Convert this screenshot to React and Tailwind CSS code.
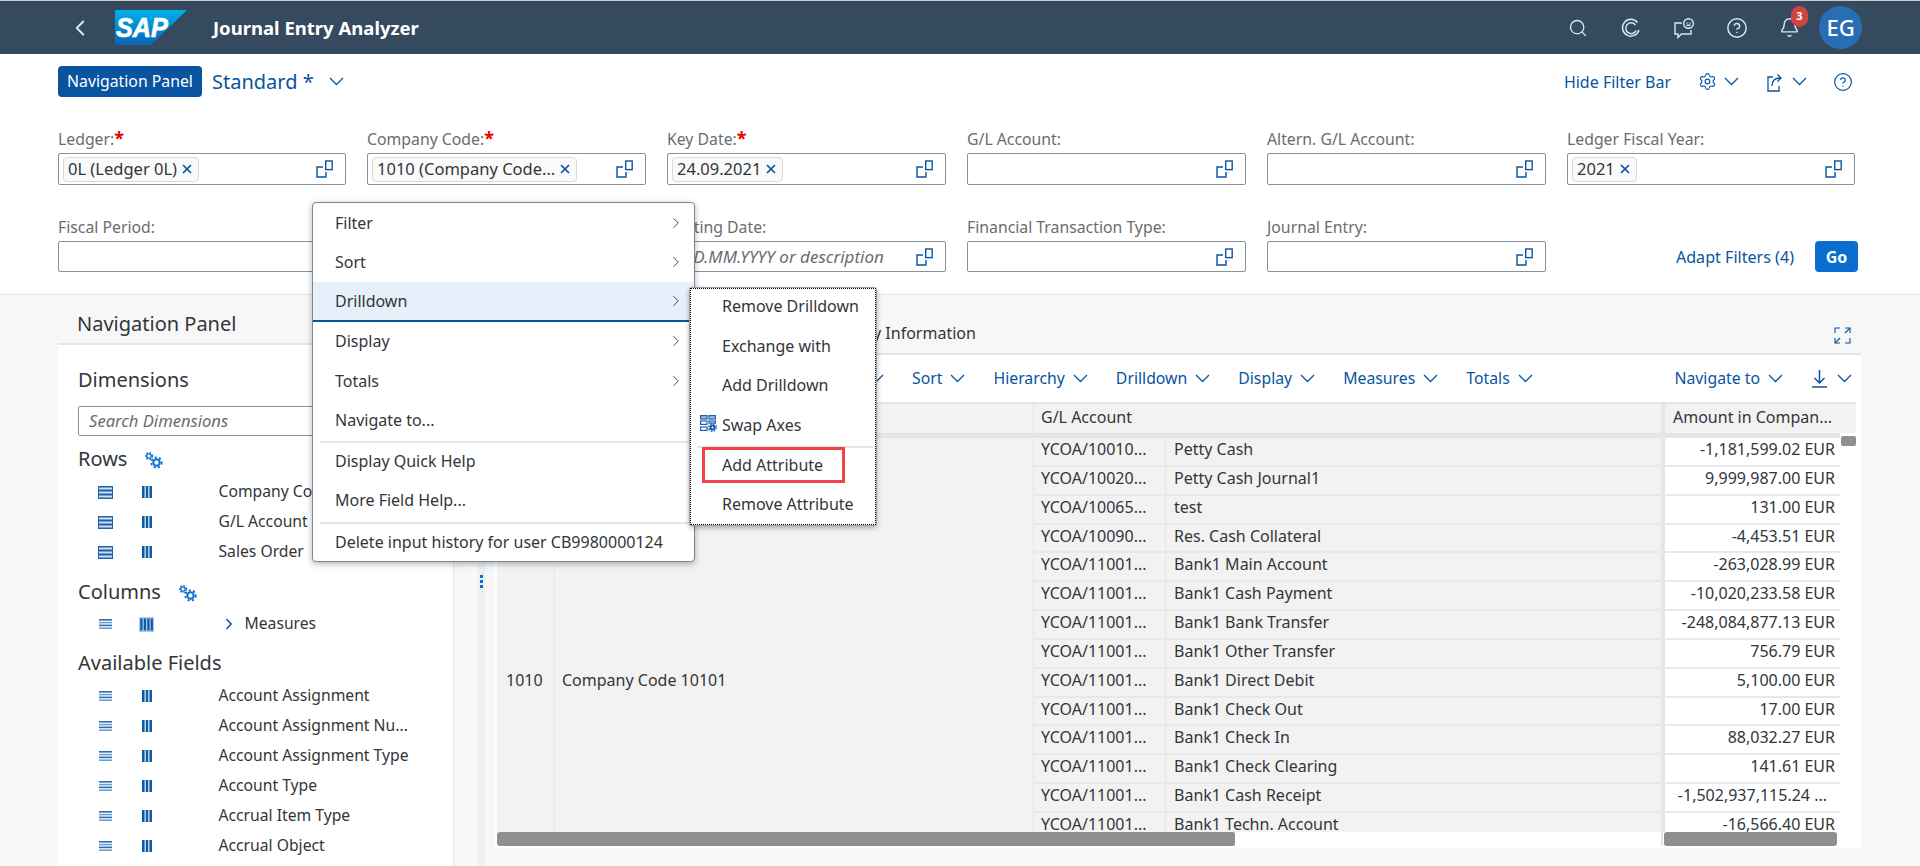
import React from "react";
import { Search, CircleHelp, Bell, Settings, ChevronRight, ChevronLeft, X } from "lucide-react";

const font = "font-['Noto_Sans','Open_Sans',sans-serif]";

function Chev({ className = "" }) {
  return (
    <svg width="15" height="9" viewBox="0 0 15 9" fill="none" stroke="currentColor" strokeWidth="1.3" className={`shrink-0 ${className}`}>
      <path d="M1 1l6.5 6.5L14 1" />
    </svg>
  );
}

function ValueHelp() {
  return (
    <svg width="17" height="18" viewBox="0 0 17 18" fill="none" stroke="#0854a0" strokeWidth="1.4">
      <rect x="9.7" y="1" width="6.5" height="8.6" />
      <path d="M7 7H1v10h9v-5" />
    </svg>
  );
}

function Chip({ children }) {
  return (
    <span className="flex items-center h-[25px] px-[4px] gap-[3px] rounded-[4px] border border-[#d9d9d9] bg-[#fafafa] text-[16.5px] text-[#32363a] whitespace-nowrap">
      {children}
      <X size={14} strokeWidth={3} className="text-[#0854a0]" />
    </span>
  );
}

function Field({ label, required, chip, placeholder, tall }) {
  return (
    <div>
      <div className="h-[24px] leading-[26px] text-[15.8px] text-[#6a6d70] whitespace-nowrap">
        {label}
        {required && <span className="text-[#e00] font-bold text-[18px] leading-[0]">*</span>}
      </div>
      <div className={`mt-[3px] ${tall ? "h-[32px]" : "h-[31px]"} flex items-center justify-between pl-[4px] pr-[12px] bg-white border border-[#89919a] rounded-[2px]`}>
        {chip ? <Chip>{chip}</Chip> : <span className="pl-[10px] italic text-[17px] text-[#6a6d70] whitespace-nowrap">{placeholder}</span>}
        <ValueHelp />
      </div>
    </div>
  );
}

function RowIcon({ active }) {
  if (active) {
    return (
      <svg width="15" height="13" viewBox="0 0 15 13">
        <rect width="15" height="13" fill="#1f62a8" />
        <rect x="1" y="1.5" width="13" height="2" fill="#cfe2f5" />
        <rect x="1" y="5.5" width="13" height="2" fill="#cfe2f5" />
        <rect x="1" y="9.5" width="13" height="2" fill="#cfe2f5" />
      </svg>
    );
  }
  return (
    <svg width="13" height="10" viewBox="0 0 13 10">
      <rect y="0" width="13" height="1.6" fill="#2a6cb0" />
      <rect y="2.8" width="13" height="1.6" fill="#6b9fd1" />
      <rect y="5.6" width="13" height="1.6" fill="#2a6cb0" />
      <rect y="8.4" width="13" height="1.6" fill="#6b9fd1" />
    </svg>
  );
}

function ColIcon({ active }) {
  if (active) {
    return (
      <svg width="15" height="15" viewBox="-2.5 -1.5 15 15">
        <rect x="-2.5" y="-1.5" width="15" height="15" fill="#a9c8e6" />
        <rect x="-1.2" y="0" width="2.2" height="12" fill="#0d5aa7" />
        <rect x="2.3" y="0" width="2.2" height="12" fill="#0d5aa7" />
        <rect x="5.8" y="0" width="2.2" height="12" fill="#0d5aa7" />
        <rect x="9.2" y="0" width="2.2" height="12" fill="#0d5aa7" />
      </svg>
    );
  }
  return (
    <svg width="10" height="12" viewBox="0 0 10 12">
      <rect x="0" width="2.6" height="12" fill="#0d5aa7" />
      <rect x="3.7" width="2.6" height="12" fill="#0d5aa7" />
      <rect x="7.4" width="2.6" height="12" fill="#0d5aa7" />
    </svg>
  );
}

function Cogs() {
  return (
    <svg width="18" height="17" viewBox="0 0 18 17" fill="none" stroke="#0a6ed1">
      <circle cx="4" cy="4" r="2.2" strokeWidth="1.3" />
      <circle cx="4" cy="4" r="3.4" strokeWidth="1.4" strokeDasharray="1.6 1.6" />
      <circle cx="11.5" cy="10.5" r="3.2" strokeWidth="2" />
      <circle cx="11.5" cy="10.5" r="5.2" strokeWidth="1.8" strokeDasharray="2.2 2.2" />
    </svg>
  );
}

function FieldRow({ name, active, measure }) {
  return (
    <div className="h-[30px] flex items-center ml-[12px] text-[15.7px]">
      <div className="w-[30px] flex justify-center"><RowIcon active={active} /></div>
      <div className="w-[30px] ml-[11.5px] flex justify-center"><ColIcon active={measure} /></div>
      {measure ? (
        <div className="ml-[57px] flex items-center">
          <ChevronRight size={18} strokeWidth={2} className="text-[#0854a0] ml-[1px] mr-[7px]" />
          <span className="whitespace-nowrap">{name}</span>
        </div>
      ) : (
        <span className="ml-[57px] whitespace-nowrap">{name}</span>
      )}
    </div>
  );
}

function ToolBtn({ label, ml = "" }) {
  return (
    <span className={`flex items-center gap-[8px] whitespace-nowrap ${ml}`}>
      {label}
      <Chev />
    </span>
  );
}

const rows = [
  ["YCOA/10010...", "Petty Cash", "-1,181,599.02 EUR"],
  ["YCOA/10020...", "Petty Cash Journal1", "9,999,987.00 EUR"],
  ["YCOA/10065...", "test", "131.00 EUR"],
  ["YCOA/10090...", "Res. Cash Collateral", "-4,453.51 EUR"],
  ["YCOA/11001...", "Bank1 Main Account", "-263,028.99 EUR"],
  ["YCOA/11001...", "Bank1 Cash Payment", "-10,020,233.58 EUR"],
  ["YCOA/11001...", "Bank1 Bank Transfer", "-248,084,877.13 EUR"],
  ["YCOA/11001...", "Bank1 Other Transfer", "756.79 EUR"],
  ["YCOA/11001...", "Bank1 Direct Debit", "5,100.00 EUR"],
  ["YCOA/11001...", "Bank1 Check Out", "17.00 EUR"],
  ["YCOA/11001...", "Bank1 Check In", "88,032.27 EUR"],
  ["YCOA/11001...", "Bank1 Check Clearing", "141.61 EUR"],
  ["YCOA/11001...", "Bank1 Cash Receipt", "-1,502,937,115.24 ..."],
  ["YCOA/11001...", "Bank1 Techn. Account", "-16,566.40 EUR"],
];

function MenuItem({ label, arrow, active, sep, mt = "" }) {
  return (
    <div className={`relative h-[39.5px] flex items-center pl-[22px] pr-[9px] justify-between whitespace-nowrap ${mt} ${active ? "bg-[#e5f0fa] border-b-2 border-[#0854a0]" : ""}`}>
      {sep && <div className="absolute left-[7px] right-0 top-0 h-[2px] bg-[#e5e5e5]" />}
      <span>{label}</span>
      {arrow && <ChevronRight size={18} strokeWidth={1.2} className="text-[#32363a]" />}
    </div>
  );
}

function SubItem({ label, sep, icon }) {
  return (
    <div className="relative h-[39.7px] flex items-center pl-[31px] whitespace-nowrap">
      {sep && <div className="absolute left-[6px] right-0 top-[1px] h-[2px] bg-[#e5e5e5]" />}
      {icon && <span className="absolute left-[9px] top-[10px]">{icon}</span>}
      <span>{label}</span>
    </div>
  );
}

function SwapIcon() {
  return (
    <svg width="17" height="17" viewBox="0 0 17 17" fill="none" stroke="#1f62a8" strokeWidth="1.2">
      <rect x="0.6" y="0.6" width="6.4" height="3.4" fill="#9cc1e6" />
      <rect x="9" y="0.6" width="6.4" height="3.4" fill="#9cc1e6" />
      <rect x="0.6" y="6" width="6.4" height="3.4" />
      <rect x="9" y="6" width="6.4" height="2" />
      <rect x="0.6" y="12" width="6.4" height="3.4" />
      <circle cx="12.5" cy="12.5" r="2" strokeWidth="2" stroke="#0a5fb4" />
      <circle cx="12.5" cy="12.5" r="3.8" strokeWidth="1.4" strokeDasharray="1.6 1.4" stroke="#0a5fb4" />
    </svg>
  );
}

export default function App() {
  return (
    <div className={`${font} relative w-[1920px] h-[866px] overflow-hidden bg-[#f7f7f7] text-[16px] text-[#32363a]`}>
      <div className="h-px bg-[#c9ccd0]" />
      {/* Shell bar */}
      <header className="h-[53px] bg-[#354a5f] flex items-center text-white">
        <ChevronLeft size={26} strokeWidth={1.8} className="ml-[67px] text-[#d1e8ff]" />
        <svg width="72" height="35" viewBox="0 0 72 35" className="ml-[22px]">
          <defs>
            <linearGradient id="sapg" x1="0" y1="0" x2="0" y2="1">
              <stop offset="0" stopColor="#00b1eb" />
              <stop offset="1" stopColor="#0a64b4" />
            </linearGradient>
          </defs>
          <polygon points="0,0 72,0 36,35 0,35" fill="url(#sapg)" />
          <text x="1" y="27" fill="#fff" stroke="#fff" strokeWidth="0.7" fontSize="27" fontWeight="700" fontStyle="italic" fontFamily="Liberation Sans" textLength="52" lengthAdjust="spacingAndGlyphs">SAP</text>
        </svg>
        <span className="ml-[26px] font-bold text-[18.5px] whitespace-nowrap">Journal Entry Analyzer</span>
        <div className="ml-auto pr-[58px] flex items-center text-[#d1e8ff]">
          <span className="w-[53px] flex justify-center"><Search size={20} strokeWidth={1.6} /></span>
          <span className="w-[53px] flex justify-center">
            <svg width="20" height="20" viewBox="0 0 20 20" fill="none" stroke="currentColor" strokeWidth="1.5">
              <path d="M16.5 4.5A8.4 8.4 0 1 0 18 12" />
              <path d="M14.5 7a5.4 5.4 0 1 0 .6 5.5" />
            </svg>
          </span>
          <span className="w-[53px] flex justify-center">
            <svg width="22" height="22" viewBox="0 0 22 22" fill="none" stroke="currentColor" strokeWidth="1.4">
              <path d="M9 6H2v11h3v3.5L8.5 17H18v-4" />
              <circle cx="15.5" cy="6.5" r="4.8" />
              <path d="M13.5 6h1M16.5 6h1M13.5 8.2h4" />
            </svg>
          </span>
          <span className="w-[53px] flex justify-center"><CircleHelp size={22} strokeWidth={1.6} /></span>
          <span className="relative w-[53px] flex justify-center">
            <Bell size={21} strokeWidth={1.6} />
            <span className="absolute left-[28px] top-[-11px] w-[17px] h-[21px] rounded-full bg-[#d04343] text-white text-[11px] font-bold flex items-center justify-center">3</span>
          </span>
          <span className="w-[43px] h-[43px] ml-[3px] rounded-full bg-[#286eb4] text-white text-[22px] font-medium flex items-center justify-center">EG</span>
        </div>
      </header>

      {/* Filter bar */}
      <section className="h-[241px] bg-white border-b border-[#e5e5e5] pl-[58px]">
        <div className="pt-[12px] flex items-center pr-[67px]">
          <button className="h-[31px] w-[144px] rounded-[4px] bg-[#0854a0] text-white text-[15.8px]">Navigation Panel</button>
          <span className="ml-[10px] text-[20px] text-[#0854a0] whitespace-nowrap">Standard *</span>
          <Chev className="ml-[15px] text-[#0854a0]" />
          <div className="ml-auto flex items-center text-[#0854a0]">
            <span className="text-[16px] whitespace-nowrap">Hide Filter Bar</span>
            <Settings size={19} strokeWidth={1.4} className="ml-[27px]" />
            <Chev className="ml-[7px]" />
            <svg width="17" height="20" viewBox="0 0 17 20" fill="none" stroke="currentColor" strokeWidth="1.3" className="ml-[28px]">
              <path d="M6 5H1v14h11v-5" />
              <path d="M5 14c0-5 3-8 8-8M10.5 2.5L14 6l-3.5 3.5" />
            </svg>
            <Chev className="ml-[8px]" />
            <CircleHelp size={20} strokeWidth={1.4} className="ml-[26px]" />
          </div>
        </div>
        <div className="mt-[29px] grid grid-cols-[288px_279px_279px_279px_279px_288px] gap-x-[21px] gap-y-[29px]">
          <Field tall label="Ledger:" required chip="0L (Ledger 0L)" />
          <Field tall label="Company Code:" required chip="1010 (Company Code..." />
          <Field tall label="Key Date:" required chip="24.09.2021" />
          <Field tall label="G/L Account:" />
          <Field tall label="Altern. G/L Account:" />
          <Field tall label="Ledger Fiscal Year:" chip="2021" />
          <Field label="Fiscal Period:" />
          <Field label="" />
          <Field label="Posting Date:" placeholder="DD.MM.YYYY or description" />
          <Field label="Financial Transaction Type:" />
          <Field label="Journal Entry:" />
          <div className="h-[58px] flex items-end justify-end -mr-[3px] text-[#0854a0]">
            <span className="h-[31px] leading-[33px] text-[16.1px] whitespace-nowrap">Adapt Filters (4)</span>
            <span className="ml-[21px] w-[43px] h-[31px] rounded-[4px] bg-[#0a6ed1] text-white font-bold flex items-center justify-center">Go</span>
          </div>
        </div>
      </section>

      {/* Body */}
      <main className="flex pl-[58px] h-[571px]">
        {/* Left panel */}
        <div className="w-[396px] shrink-0">
          <div className="h-[48px] pt-[15px] pl-[19px] text-[20px] leading-[28px]">Navigation Panel</div>
          <div className="h-[540px] bg-white border-t-2 border-r border-[#e5e5e5] pl-[20px] pt-[20px]">
            <div className="h-[30px] leading-[30px] text-[20px]">Dimensions</div>
            <div className="mt-[11px] h-[30px] w-[370px] border border-[#89919a] rounded-[2px] pl-[10px] leading-[28px] italic text-[16.6px] text-[#6a6d70]">Search Dimensions</div>
            <div className="mt-[8px] h-[30px] flex items-center text-[20px]">Rows<span className="ml-[18px] mt-[3px]"><Cogs /></span></div>
            <div className="mt-[3px]">
              <FieldRow active name="Company Code" />
              <FieldRow active name="G/L Account" />
              <FieldRow active name="Sales Order" />
            </div>
            <div className="mt-[10px] h-[30px] flex items-center text-[20px]">Columns<span className="ml-[18px] mt-[3px]"><Cogs /></span></div>
            <div className="mt-[2px]"><FieldRow measure name="Measures" /></div>
            <div className="mt-[9px] h-[30px] leading-[30px] text-[20px]">Available Fields</div>
            <div className="mt-[3px]">
              {["Account Assignment", "Account Assignment Nu...", "Account Assignment Type", "Account Type", "Accrual Item Type", "Accrual Object"].map((n) => (
                <FieldRow key={n} name={n} />
              ))}
            </div>
          </div>
        </div>

        {/* Sash */}
        <div className="ml-[15px] w-[16px] shrink-0 flex">
          <div className="w-[9px] bg-[#f9f9f9]" />
          <div className="w-[7px] bg-[#eeeff1] relative">
            <svg width="3" height="13" viewBox="0 0 3 13" className="absolute left-[2px] top-[280px]">
              <rect width="3" height="3" y="0" fill="#0a6ed1" />
              <rect width="3" height="3" y="5" fill="#0a6ed1" />
              <rect width="3" height="3" y="10" fill="#0a6ed1" />
            </svg>
          </div>
        </div>

        {/* Right panel */}
        <div className="ml-[10px] w-[1366px] shrink-0">
          <div className="h-[58px] relative whitespace-nowrap">
            <span className="absolute left-[340px] top-[26px] leading-[24px]">Query Information</span>
            <svg width="17" height="17" viewBox="0 0 17 17" fill="none" stroke="#0854a0" strokeWidth="1.1" className="absolute right-[10px] top-[32px]">
              <path d="M1 6V1h5M11 1h5v5M16 11v5h-5M6 16H1v-5" />
              <path d="M16 1l-5 5M1 16l5-5" />
            </svg>
          </div>
          <div className="bg-white border-t-2 border-[#e5e5e5] pl-[2px] pb-[2px]">
            <div className="h-[47px] flex items-center text-[#0854a0] text-[15.8px] pl-[372px] pr-[9px]">
              <Chev />
              <ToolBtn label="Sort" ml="ml-[28px]" />
              <ToolBtn label="Hierarchy" ml="ml-[28px]" />
              <ToolBtn label="Drilldown" ml="ml-[28px]" />
              <ToolBtn label="Display" ml="ml-[28px]" />
              <ToolBtn label="Measures" ml="ml-[28px]" />
              <ToolBtn label="Totals" ml="ml-[28px]" />
              <ToolBtn label="Navigate to" ml="ml-auto" />
              <svg width="17" height="19" viewBox="0 0 17 19" fill="none" stroke="currentColor" strokeWidth="1.5" className="ml-[28px]">
                <path d="M8.5 1v13M3.5 9l5 5 5-5M1 18h15" />
              </svg>
              <Chev className="ml-[9px]" />
            </div>
            {/* Table */}
            <div className="w-[1359px] h-[444px] border-t-2 border-[#e5e5e5] relative">
              <div className="h-[29px] flex bg-[#f2f2f2]">
                <div className="w-[537px] border-r border-[#e5e5e5]" />
                <div className="w-[627px] pl-[7px] leading-[27px]">G/L Account</div>
                <div className="w-[4px] bg-[#e5e5e5]" />
                <div className="w-[175px] pl-[8px] leading-[27px] whitespace-nowrap">Amount in Compan...</div>
              </div>
              <div className="h-[5px] w-[1343px] bg-[#e5e5e5]" />
              <div className="h-[394px] overflow-hidden flex">
                <div className="w-[537px] shrink-0 bg-[#f2f2f2] flex border-r border-[#e5e5e5]">
                  <span className="w-[58px] pl-[9px] pt-[90px] flex items-center border-r border-[#e8e8e8]">1010</span>
                  <span className="pl-[7px] pt-[90px] flex items-center">Company Code 10101</span>
                </div>
                <div className="w-[806px] shrink-0">
                  {rows.map(([c, n, a], i) => (
                    <div key={i} className="h-[28.85px] flex border-b-2 border-[#e8e8e8]">
                      <div className="w-[132px] bg-[#f2f2f2] pl-[7px] border-r border-[#e5e5e5] leading-[23px] whitespace-nowrap">{c}</div>
                      <div className="w-[495px] bg-[#f2f2f2] pl-[8px] leading-[23px] whitespace-nowrap">{n}</div>
                      <div className="w-[4px] bg-[#e5e5e5]" />
                      <div className={`w-[175px] bg-white text-right leading-[23px] whitespace-nowrap ${i === 12 ? "pr-[13px]" : "pr-[5px]"}`}>{a}</div>
                    </div>
                  ))}
                </div>
              </div>
              <div className="h-[14px] flex bg-white">
                <div className="w-[738px] bg-[#8f8f8f] rounded-l-[3px] rounded-r-[2px]" />
                <div className="w-[426px]" />
                <div className="w-[2px] bg-[#e5e5e5]" />
                <div className="ml-[1px] w-[173px] bg-[#8f8f8f] rounded-[3px]" />
              </div>
              <div className="absolute right-0 top-[32px] w-[15px] h-[10px] rounded-[2px] bg-[#909090]" />
            </div>
          </div>
        </div>
      </main>

      {/* Context menu */}
      <div className="absolute left-[312px] top-[202px] w-[383px] h-[360px] bg-white border border-[#7d8790] rounded-[4px] shadow-[0_2px_6px_rgba(0,0,0,0.3)]">
        <MenuItem label="Filter" arrow />
        <MenuItem label="Sort" arrow />
        <MenuItem label="Drilldown" arrow active />
        <MenuItem label="Display" arrow />
        <MenuItem label="Totals" arrow />
        <MenuItem label="Navigate to..." />
        <MenuItem label="Display Quick Help" sep mt="mt-[1px]" />
        <MenuItem label="More Field Help..." />
        <MenuItem label="Delete input history for user CB9980000124" sep mt="mt-[2px]" />
      </div>
      {/* Submenu */}
      <div className="absolute left-[689px] top-[287px] w-[188px] h-[239px] bg-white border border-[#9a9fa5] rounded-[3px] shadow-[0_2px_5px_rgba(0,0,0,0.3)]">
        <div className="h-full border border-dotted border-black overflow-hidden">
          <div className="-mt-[3px]">
            <SubItem label="Remove Drilldown" />
            <SubItem label="Exchange with" />
            <SubItem label="Add Drilldown" />
            <SubItem label="Swap Axes" icon={<SwapIcon />} />
            <SubItem label="Add Attribute" sep />
            <SubItem label="Remove Attribute" />
          </div>
        </div>
        <div className="absolute left-[12px] top-[159px] w-[143px] h-[36px] border-[3px] border-[#f0444a]" />
      </div>
    </div>
  );
}
